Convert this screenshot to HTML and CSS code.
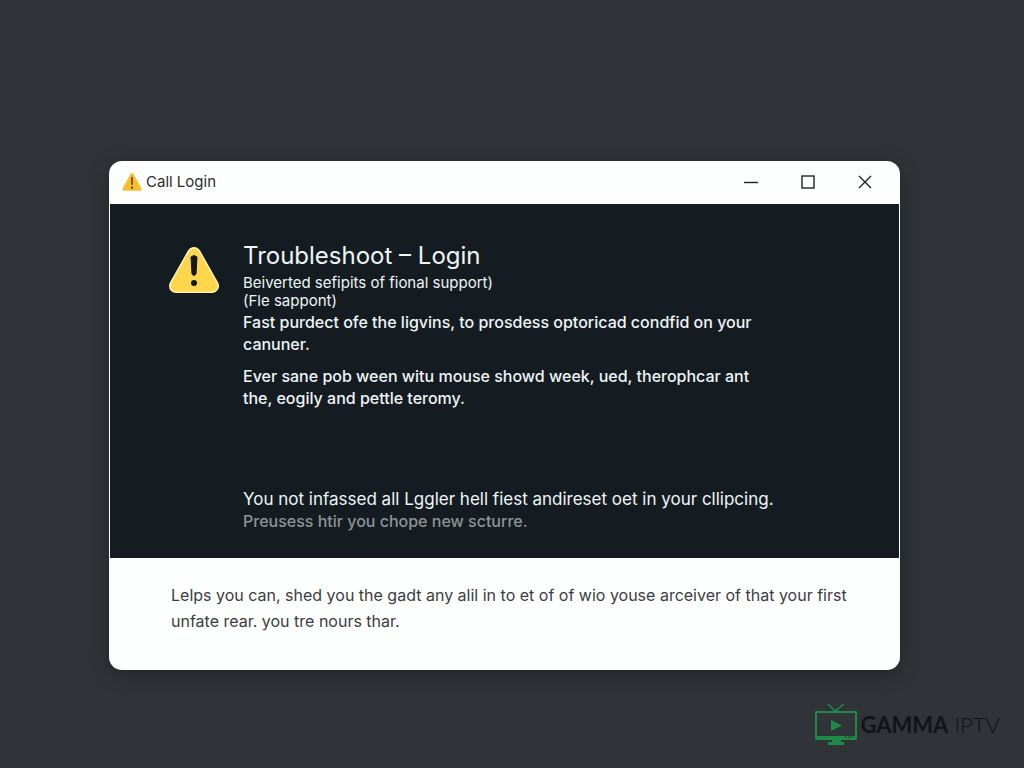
FILE: index.html
```html
<!DOCTYPE html>
<html lang="en">
<head>
    <meta charset="UTF-8">
    <meta name="viewport" content="width=device-width, initial-scale=1.0">
    <title>Troubleshoot - Login</title>
    <link rel="stylesheet" href="styles.css">
</head>
<body>
    <main class="window">
        <header class="titlebar">
            <svg class="titlebar-icon" viewBox="0 0 52 48" aria-hidden="true">
                <path d="M26 5 L47 43 H5 Z" fill="#f9bd2c" stroke="#f9bd2c" stroke-width="9" stroke-linejoin="round"/>
                <path d="M26 12 V30" stroke="#4a3a10" stroke-width="4" stroke-linecap="round"/>
                <circle cx="26" cy="39" r="3" fill="#4a3a10"/>
            </svg>
            <span class="titlebar-text">Call Login</span>
            <div class="controls">
                <button type="button" class="control" aria-label="Minimize">
                    <svg viewBox="0 0 16 16"><path d="M1 8.500 H15"/></svg>
                </button>
                <button type="button" class="control" aria-label="Maximize">
                    <svg viewBox="0 0 16 16"><rect x="2" y="2" width="12" height="12"/></svg>
                </button>
                <button type="button" class="control" aria-label="Close">
                    <svg viewBox="0 0 16 16"><path d="M2 2 L14 14 M14 2 L2 14"/></svg>
                </button>
            </div>
        </header>

        <section class="content">
            <svg class="warning-icon" viewBox="0 0 52 48" aria-hidden="true">
                <path d="M26 8 L44 40 H8 Z" fill="#fff2b5" stroke="#fff2b5" stroke-width="14" stroke-linejoin="round"/>
                <path d="M26 8 L44 40 H8 Z" fill="#fdd64b" stroke="#fdd64b" stroke-width="11" stroke-linejoin="round"/>
                <path d="M23 11 Q26 8 29 11 L28 28 Q26 31 24 28 Z" fill="#15181a" stroke="#15181a" stroke-linejoin="round"/>
                <circle cx="26" cy="37" r="3" fill="#15181a"/>
            </svg>
            <div class="message">
                <h1>Troubleshoot – Login</h1>
                <p class="lead">Beiverted sefipits of fional support)<br>(Fle sappont)</p>
                <p>Fast purdect ofe the ligvins, to prosdess optoricad condfid on your canuner.</p>
                <p>Ever sane pob ween witu mouse showd week, ued, therophcar ant<br>the, eogily and pettle teromy.</p>
                <p class="status">You not infassed all Lggler hell fiest andireset oet in your cllipcing.</p>
                <p class="muted">Preusess htir you chope new scturre.</p>
            </div>
        </section>

        <footer class="note">
            <p>Lelps you can, shed you the gadt any alil in to et of of wio youse arceiver of that your first<br>unfate rear. you tre nours thar.</p>
        </footer>
    </main>

    <div class="brand">
        <svg class="brand-icon" viewBox="0 0 42 43" aria-hidden="true">
            <path d="M13 1 L20 8 L29 1" fill="none" stroke="#1f8a48" stroke-width="1.5"/>
            <path d="M17 9 Q21 5 25 9 Z" fill="#1f8a48"/>
            <rect x="1" y="9" width="40" height="27" rx="1" fill="none" stroke="#1f8a48" stroke-width="2"/>
            <path d="M1 33 H41 V36 H1 Z M17 36 H26 V39 H29 V42 H13 V39 H17 Z M16 17 L27 22.500 L16 28 Z" fill="#1f8a48"/>
            <path d="M30 34 H39" stroke="#303337" stroke-dasharray="2 1"/>
        </svg>
        <span class="brand-name"><strong>GAMMA</strong> IPTV</span>
    </div>
</body>
</html>
```

FILE: styles.css
```css
* {
    margin: 0;
    padding: 0;
    box-sizing: border-box;
}

body {
    font-family: Inter, 'Liberation Sans', sans-serif;
    background: #303337;
    min-height: 100vh;
    display: flex;
    flex-direction: column;
    padding: 161px 24px 20px 24px;
}

.window {
    margin: 0 100px 0 85px;
    background: #fdfffe;
    border-radius: 13px;
    box-shadow: 0 4px 20px rgba(0, 0, 0, 0.3);
}

.titlebar {
    display: flex;
    align-items: center;
    height: 43px;
    padding: 0 7px 2px 13px;
    color: #2b2d2f;
}

.titlebar-icon {
    width: 20px;
    height: 18px;
    margin-right: 4px;
}

.titlebar-text {
    font-size: 15px;
}

.controls {
    display: flex;
    margin-left: auto;
}

.control {
    display: flex;
    align-items: center;
    justify-content: center;
    width: 57px;
    height: 41px;
    border: none;
    background: none;
}

.control svg {
    width: 16px;
    height: 16px;
    fill: none;
    stroke: #222;
    stroke-width: 1.4;
}

.content {
    display: flex;
    gap: 22px;
    margin: 0 1px;
    padding: 36px 110px 26px 57px;
    background: #141c22;
    color: #eef5f5;
}

.warning-icon {
    flex: none;
    width: 54px;
    height: 48px;
    margin-top: 6px;
}

h1 {
    font-size: 24px;
    font-weight: 400;
    line-height: 32px;
    margin-bottom: 2px;
}

.message p {
    font-size: 16px;
    font-weight: 500;
    line-height: 22px;
    margin-bottom: 10px;
}

.message .lead {
    font-size: 15px;
    font-weight: 400;
    line-height: 18px;
    margin-bottom: 1px;
}

.message .status {
    font-size: 17px;
    font-weight: 400;
    margin: 79px 0 0;
}

.message .muted {
    margin: 0;
    color: #8d9496;
}

.note {
    padding: 24px 40px 36px 62px;
    color: #3b3d3e;
    font-size: 16px;
    line-height: 26px;
}

.brand {
    display: flex;
    align-items: center;
    gap: 3px;
    align-self: flex-end;
    margin-top: 33px;
    color: #111417;
}

.brand-icon {
    width: 42px;
    height: 43px;
}

.brand-name {
    font-family: Lato, sans-serif;
    font-size: 22px;
    font-weight: 300;
    line-height: 26px;
}

.brand-name strong {
    font-weight: 700;
}
```
